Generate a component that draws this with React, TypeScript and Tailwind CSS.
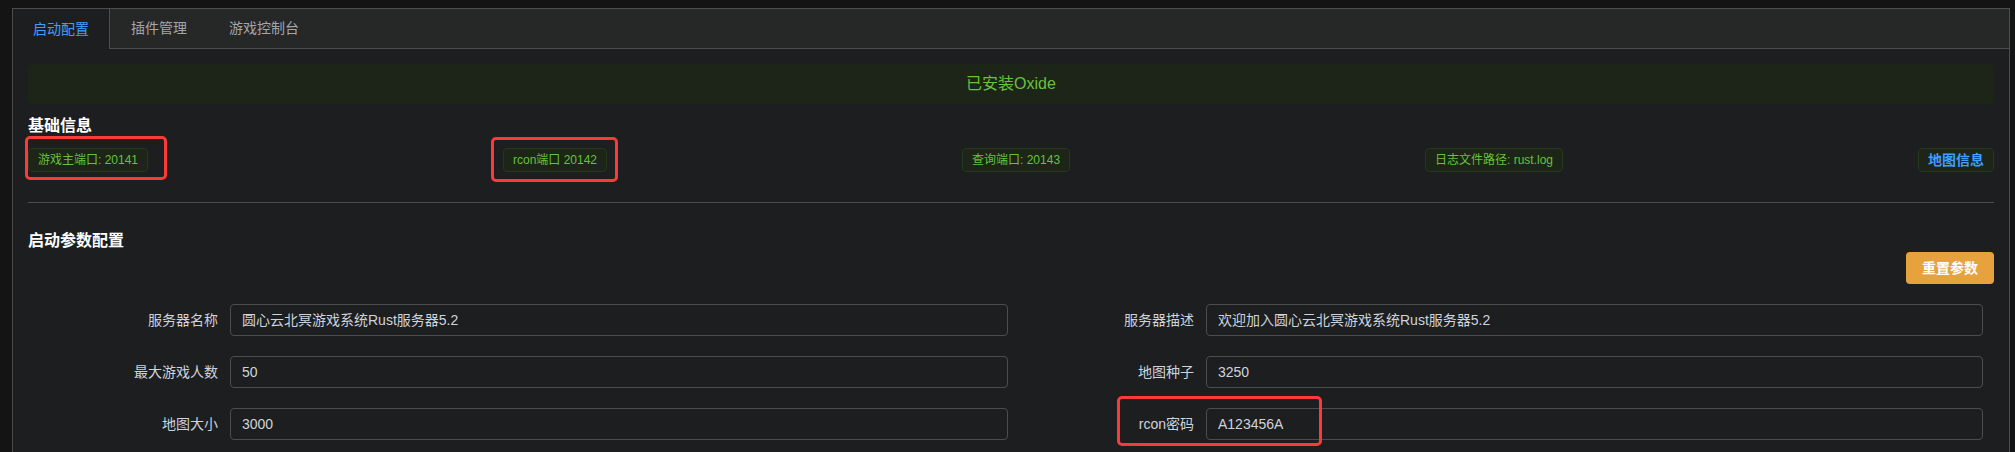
import React from "react";

const tags: { text: string; box?: { l: number; t: number; w: number; h: number } }[] = [
  { text: "游戏主端口: 20141", box: { l: -4, t: -13, w: 142, h: 44 } },
  { text: "rcon端口 20142", box: { l: -13, t: -12, w: 127, h: 45 } },
  { text: "查询端口: 20143" },
  { text: "日志文件路径: rust.log" },
];

function Field({
  label,
  value,
  labelW,
}: {
  label: string;
  value: string;
  labelW: string;
}) {
  return (
    <div className="flex items-center h-[32px]">
      <div className={`${labelW} shrink-0 pr-[12px] text-right text-[14px] text-[#cfd3dc]`}>{label}</div>
      <div className="flex-1 h-[32px] rounded-[4px] border border-[#4c4d4f] flex items-center px-[11px] text-[14px] text-[#cfd3dc]">
        {value}
      </div>
    </div>
  );
}

export default function App() {
  return (
    <div className="min-h-[452px] bg-[#141414] pt-[8px] pl-[12px] pr-[5px] font-['Liberation_Sans','Noto_Sans_CJK_SC',sans-serif]">
      <div className="border border-[#4c4d4f] bg-[#1d1e1f] pb-[30px]">
        {/* tabs header */}
        <div className="flex items-start h-[40px] bg-[#262727] border-b border-[#4c4d4f]">
          <div className="h-[40px] -mb-px flex items-center px-[20px] bg-[#1d1e1f] border-r border-[#4c4d4f] text-[14px] text-[#409eff]">
            启动配置
          </div>
          <div className="h-[39px] flex items-center px-[20px] border-x border-transparent text-[14px] text-[#a3a6ad]">
            插件管理
          </div>
          <div className="h-[39px] flex items-center px-[20px] border-x border-transparent text-[14px] text-[#a3a6ad]">
            游戏控制台
          </div>
        </div>

        <div className="px-[15px] pt-[15px]">
          {/* alert */}
          <div className="h-[40px] rounded-[4px] bg-[#1c2518] flex items-center justify-center text-[16px] text-[#67c23a]">
            已安装Oxide
          </div>

          <div className="mt-[10px] text-[16px] leading-[24px] font-bold text-white">基础信息</div>

          <div className="mt-[10px] flex justify-between items-center">
            {tags.map((t) => (
              <div
                key={t.text}
                className="relative inline-flex items-center h-[24px] px-[9px] rounded-[4px] border border-[#25371c] bg-[#1c2518] text-[12px] text-[#67c23a] whitespace-nowrap"
              >
                {t.text}
                {t.box && (
                  <div
                    className="absolute border-[3px] border-[#fc3a3a] rounded-[5px] pointer-events-none"
                    style={{ left: t.box.l, top: t.box.t, width: t.box.w, height: t.box.h }}
                  />
                )}
              </div>
            ))}
            <div className="inline-flex items-center h-[24px] px-[9px] rounded-[4px] border border-[#25371c] bg-[#1c2518] text-[14px] font-bold text-[#409eff] whitespace-nowrap">
              地图信息
            </div>
          </div>

          <div className="mt-[30px] h-px bg-[#4c4d4f]" />

          <div className="mt-[27px] text-[16px] leading-[22px] font-bold text-white">启动参数配置</div>

          <div className="flex justify-end">
            <div className="h-[32px] px-[16px] rounded-[4px] bg-[#e6a23c] flex items-center text-[14px] font-bold text-white">
              重置参数
            </div>
          </div>

          <div className="mt-[20px] flex">
            <div className="w-[980px] flex flex-col gap-[20px]">
              <Field label="服务器名称" value="圆心云北冥游戏系统Rust服务器5.2" labelW="w-[202px]" />
              <Field label="最大游戏人数" value="50" labelW="w-[202px]" />
              <Field label="地图大小" value="3000" labelW="w-[202px]" />
            </div>
            <div className="w-[975px] flex flex-col gap-[20px]">
              <Field label="服务器描述" value="欢迎加入圆心云北冥游戏系统Rust服务器5.2" labelW="w-[198px]" />
              <Field label="地图种子" value="3250" labelW="w-[198px]" />
              <div className="relative">
                <Field label="rcon密码" value="A123456A" labelW="w-[198px]" />
                <div className="absolute left-[109px] top-[-12px] w-[205px] h-[50px] border-[3px] border-[#fc3a3a] rounded-[5px] pointer-events-none" />
              </div>
            </div>
          </div>
        </div>
      </div>
    </div>
  );
}
